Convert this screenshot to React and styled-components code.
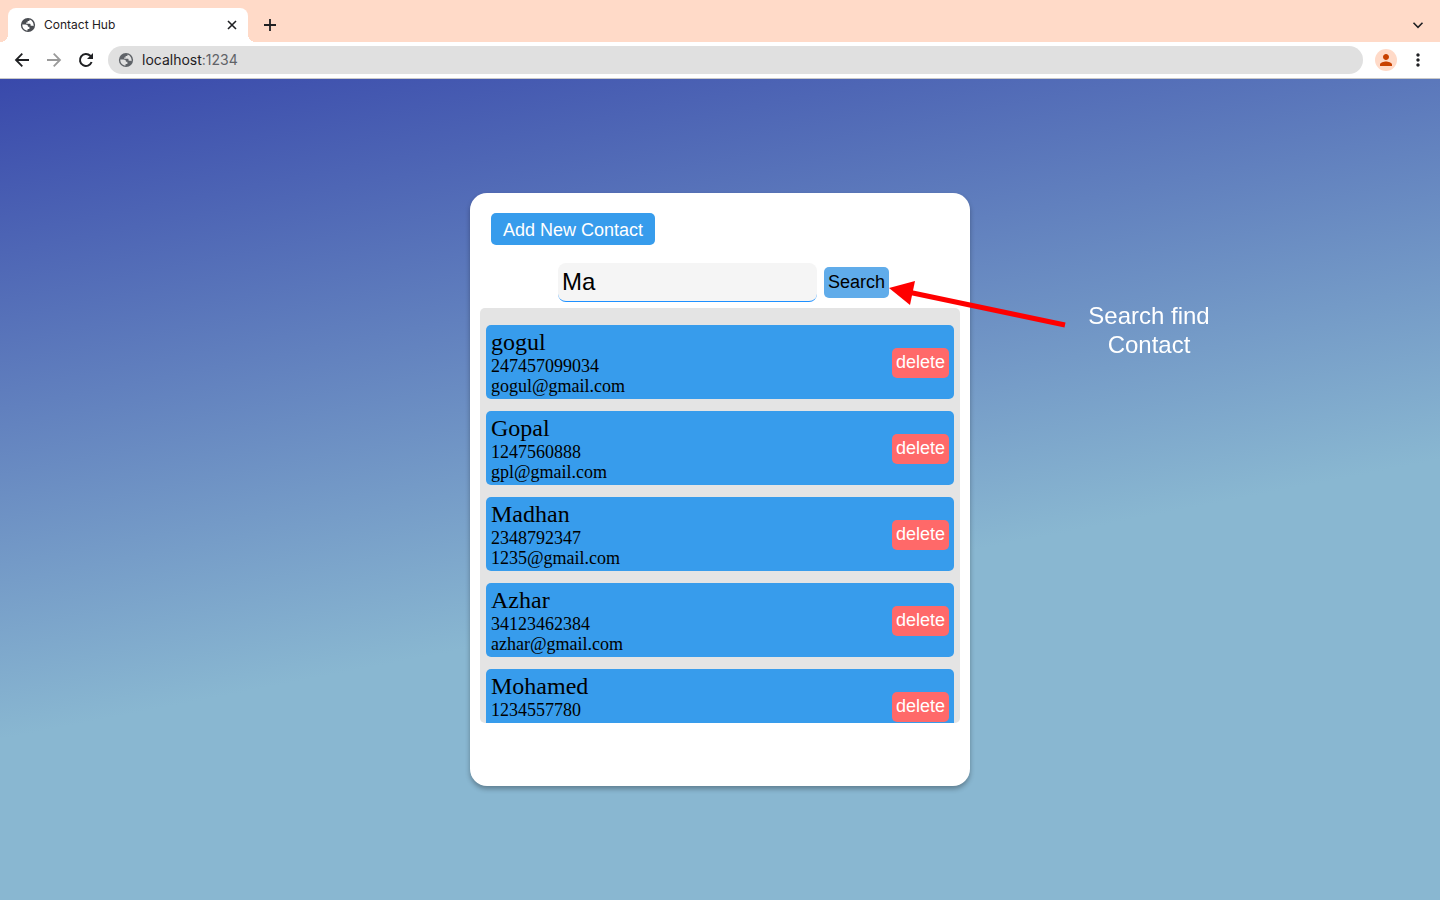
import React, { useState } from "react";
import styled, { createGlobalStyle } from "styled-components";
import { MdMoreVert, MdPerson } from "react-icons/md";

const GlobalStyle = createGlobalStyle`
  * { box-sizing: border-box; }
  body { margin: 0; }
  button, input { font-family: "Liberation Sans", Arial, sans-serif; }
`;

const Window = styled.div`
  min-height: 100vh;
  display: flex;
  flex-direction: column;
`;

const TabStrip = styled.header`
  display: flex;
  align-items: flex-end;
  height: 42px;
  padding: 0 10px 0 8px;
  background: #ffdac8;
  font-family: Inter, sans-serif;
`;

const Tab = styled.div`
  display: flex;
  align-items: center;
  gap: 8px;
  width: 240px;
  height: 34px;
  padding: 0 8px 0 12px;
  border-radius: 8px 8px 0 0;
  background: #fff;
  color: #1f2023;
  font-size: 12px;
  position: relative;

  &::before,
  &::after {
    content: "";
    position: absolute;
    bottom: 0;
    width: 8px;
    height: 8px;
  }
  &::before {
    left: -8px;
    background: radial-gradient(circle at 0 0, transparent 8px, #fff 8px);
  }
  &::after {
    right: -8px;
    background: radial-gradient(circle at 100% 0, transparent 8px, #fff 8px);
  }
`;

const BarText = styled.span`
  flex: 1;
  padding-bottom: 2px;
`;

const IconButton = styled.button`
  display: flex;
  align-items: center;
  justify-content: center;
  width: ${(p) => p.$size || 16}px;
  height: ${(p) => p.$size || 16}px;
  padding: 0;
  border: 0;
  background: none;
  color: ${(p) => p.$color || "#1f2023"};
`;

const StripActions = styled.div`
  flex: 1;
  display: flex;
  justify-content: space-between;
  align-items: center;
  height: 34px;
  padding-left: 12px;
`;

const Toolbar = styled.nav`
  display: flex;
  align-items: center;
  gap: 12px;
  height: 37px;
  padding: 0 12px;
  border-bottom: 1px solid #c8c8c8;
  background: #fff;
`;

const ToolbarEnd = styled.div`
  display: flex;
  align-items: center;
  gap: 11px;
`;

const AddressBar = styled.div`
  flex: 1;
  display: flex;
  align-items: center;
  gap: 8px;
  height: 28px;
  padding: 0 10px;
  border-radius: 14px;
  background: #e0e0e0;
  font-family: Inter, sans-serif;
  font-size: 14px;
  color: #1f2023;
`;

const Port = styled.span`
  color: #606368;
`;

const Avatar = styled(IconButton)`
  border-radius: 50%;
  background: #ffdac8;
`;

const Page = styled.main`
  flex: 1;
  display: flex;
  align-items: center;
  justify-content: center;
  padding: 24px;
  overflow: hidden;
  background: linear-gradient(169deg, #3949ab, #89b7d1 60%);
`;

const Card = styled.section`
  position: relative;
  width: 100%;
  max-width: 500px;
  padding: 20px 10px 63px;
  border-radius: 17px;
  background: #fff;
  box-shadow: 0 3px 5px rgba(0, 0, 0, 0.3);
`;

const Button = styled.button`
  height: 31px;
  padding: 0 4px;
  border: 0;
  border-radius: 5px;
  font-size: 18px;
  color: #fff;
`;

const AddButton = styled(Button)`
  display: block;
  height: 32px;
  margin-left: 11px;
  padding: 2px 12px 0;
  background: #379cec;
`;

const SearchForm = styled.form`
  display: flex;
  align-items: center;
  justify-content: center;
  gap: 7px;
  margin: 18px 0 6px;
  padding-left: 7px;
`;

const SearchInput = styled.input`
  width: 259px;
  height: 39px;
  padding: 0 4px;
  border: 0;
  border-bottom: 1px solid #1e90ff;
  border-radius: 8px;
  outline: 0;
  background: #f5f5f5;
  font-size: 24px;
  color: #000;
`;

const SearchButton = styled(Button)`
  background: #60acea;
  color: #000;
`;

const DeleteButton = styled(Button)`
  height: 30px;
  background: #ff6969;
`;

const ContactList = styled.ul`
  display: flex;
  flex-direction: column;
  gap: 12px;
  max-height: 415px;
  margin: 0;
  padding: 17px 6px;
  overflow-y: auto;
  scrollbar-width: none;
  list-style: none;
  border-radius: 5px;
  background: #e4e4e4;
`;

const ContactRow = styled.li`
  flex: none;
  display: flex;
  align-items: center;
  justify-content: space-between;
  padding: 4px 5px 3px;
  border-radius: 5px;
  background: #379cec;
  font-family: "Liberation Serif", "Times New Roman", serif;
  color: #000;
`;

const Name = styled.div`
  font-size: 24px;
  line-height: 27px;
`;

const Detail = styled.div`
  font-size: 18px;
  line-height: 20px;
`;

const Callout = styled.aside`
  position: absolute;
  top: 88px;
  left: 418px;
  display: flex;
  gap: 18px;
  pointer-events: none;
`;

const CalloutText = styled.p`
  width: 126px;
  margin: 20px 0 0;
  font-family: "Liberation Sans", Helvetica, sans-serif;
  font-size: 24px;
  line-height: 29px;
  text-align: center;
  color: #fff;
`;

const GlobeIcon = ({ land, color }) => (
  <svg width="16" height="16" viewBox="0 0 16 16" aria-hidden="true">
    <circle cx="8" cy="8" r="7.1" fill={color} />
    <path
      fill={land}
      d="M2.3 7.4h3.2c1.7 0 2.5.8 2.5 2.3h1.4v2.2H7.6v1.7C4.6 13.5 2.3 11 2.3 8z M9.6 2.5c.1.5-.1 1.4-.8 1.6H7.6v1.4H6.2v1.3h3.5c.6 0 .9.5.9 1.1v.8h2c.5 0 .8.2 1 .5.3-2.9-1-5.6-4-6.7z"
    />
  </svg>
);

const LineIcon = ({ size, d, weight = 2, children }) => (
  <svg
    width={size}
    height={size}
    viewBox={`0 0 ${size} ${size}`}
    fill="none"
    stroke="currentColor"
    strokeWidth={weight}
    aria-hidden="true"
  >
    <path d={d} />
    {children}
  </svg>
);

const contacts = [
  { name: "gogul", phone: "247457099034", email: "gogul@gmail.com" },
  { name: "Gopal", phone: "1247560888", email: "gpl@gmail.com" },
  { name: "Madhan", phone: "2348792347", email: "1235@gmail.com" },
  { name: "Azhar", phone: "34123462384", email: "azhar@gmail.com" },
  { name: "Mohamed", phone: "1234557780", email: "mohamed@gmail.com" },
];

export default function App() {
  const [query, setQuery] = useState("Ma");
  return (
    <Window>
      <GlobalStyle />
      <TabStrip>
        <Tab>
          <GlobeIcon color="#4a4d52" land="#fff" />
          <BarText>Contact Hub</BarText>
          <IconButton aria-label="Close tab">
            <LineIcon size={16} weight={1.6} d="M4 4L12 12M12 4L4 12" />
          </IconButton>
        </Tab>
        <StripActions>
          <IconButton $size={20} aria-label="New tab">
            <LineIcon size={20} weight={1.8} d="M10 4V16M4 10H16" />
          </IconButton>
          <IconButton $size={24} aria-label="Search tabs">
            <LineIcon size={16} weight={1.6} d="M3.5 5.8L8 10.3L12.5 5.8" />
          </IconButton>
        </StripActions>
      </TabStrip>
      <Toolbar>
        <IconButton $size={20} aria-label="Back">
          <LineIcon size={20} weight={1.8} d="M17 10H4.5M10.3 3.7L4 10L10.3 16.3" />
        </IconButton>
        <IconButton $size={20} $color="#9a9a9a" aria-label="Forward">
          <LineIcon size={20} weight={1.8} d="M3 10H15.5M9.7 3.7L16 10L9.7 16.3" />
        </IconButton>
        <IconButton $size={20} aria-label="Reload">
          <LineIcon size={20} d="M15.6 12A6 6 0 1 1 14.3 5.8L15.5 7">
            <path d="M17 3V9H11Z" fill="currentColor" stroke="none" />
          </LineIcon>
        </IconButton>
        <AddressBar>
          <GlobeIcon color="#5f6368" land="#e0e0e0" />
          <BarText>localhost<Port>:1234</Port></BarText>
        </AddressBar>
        <ToolbarEnd>
          <Avatar $size={22} $color="#c84100" aria-label="Profile"><MdPerson size={18} /></Avatar>
          <IconButton $size={20} aria-label="Menu"><MdMoreVert size={20} /></IconButton>
        </ToolbarEnd>
      </Toolbar>
      <Page>
        <Card>
          <AddButton type="button">Add New Contact</AddButton>
          <SearchForm onSubmit={(e) => e.preventDefault()}>
            <SearchInput aria-label="Search contacts" value={query} onChange={(e) => setQuery(e.target.value)} />
            <SearchButton type="submit">Search</SearchButton>
          </SearchForm>
          <ContactList>
            {contacts.map((c) => (
              <ContactRow key={c.name}>
                <div>
                  <Name>{c.name}</Name>
                  <Detail>{c.phone}</Detail>
                  <Detail>{c.email}</Detail>
                </div>
                <DeleteButton type="button">delete</DeleteButton>
              </ContactRow>
            ))}
          </ContactList>
          <Callout>
            <svg width="180" height="50" viewBox="0 0 180 50" aria-hidden="true">
              <path d="M20 11 L177 44" stroke="#f00" strokeWidth="5" />
              <path d="M1 7 L27 0 L22 24 Z" fill="#f00" />
            </svg>
            <CalloutText>Search find Contact</CalloutText>
          </Callout>
        </Card>
      </Page>
    </Window>
  );
}
